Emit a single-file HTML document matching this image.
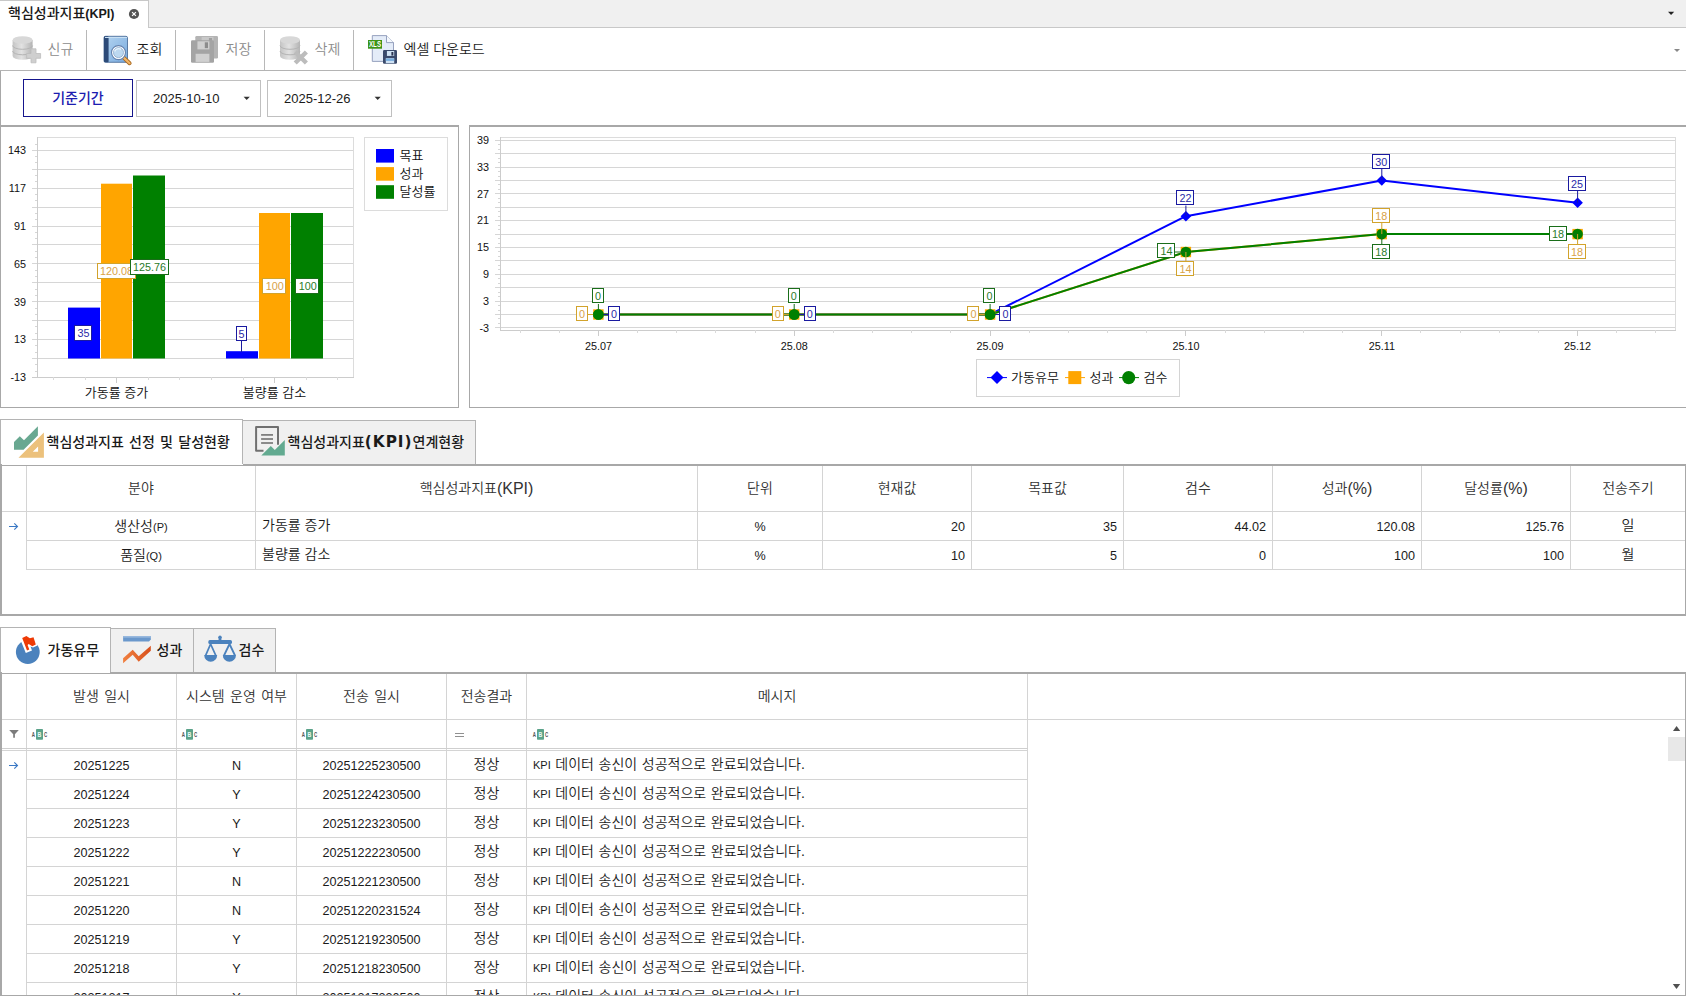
<!DOCTYPE html>
<html lang="ko"><head><meta charset="utf-8"><title>핵심성과지표(KPI)</title>
<style>
html,body{margin:0;padding:0;}
body{width:1686px;height:996px;overflow:hidden;background:#fff;position:relative;
 font-family:"Liberation Sans","Noto Sans CJK KR",sans-serif;font-size:14px;color:#1a1a1a;font-weight:350;}
.a{position:absolute;}
.t{position:absolute;white-space:nowrap;line-height:20px;height:20px;}
.c{text-align:center;}
.r{text-align:right;}
.n{font-size:12.6px;}
.s{font-size:11px;}
.hl{position:absolute;height:1px;background:#d4d4d4;}
.vl{position:absolute;width:1px;background:#d4d4d4;}
.b{font-weight:bold;}
.m{font-weight:500;}
svg{position:absolute;left:0;top:0;}
svg text{font-family:"Liberation Sans","Noto Sans CJK KR",sans-serif;}
</style></head><body>

<div class="a" style="left:0px;top:0px;width:1686px;height:27px;background:#f0f0f0;"></div>
<div class="a" style="left:0px;top:27px;width:1686px;height:1px;background:#c8c8c8;"></div>
<div class="a" style="left:0px;top:0px;width:148px;height:28px;background:#fff;"></div>
<div class="a" style="left:148px;top:0px;width:1px;height:28px;background:#c8c8c8;"></div>
<div class="a" style="left:0px;top:0px;width:149px;height:1px;background:#c8c8c8;"></div>
<div class="t m" style="left:8px;top:3.4000000000000004px;font-size:14px;color:#1a1a1a;">핵심성과지표<span style="font-size:12.5px;font-weight:bold">(KPI)</span></div>
<div class="a" style="left:0px;top:70px;width:1686px;height:1px;background:#b4b4b4;"></div>
<div class="a" style="left:86px;top:30px;width:1px;height:40px;background:#b8b8b8;"></div>
<div class="a" style="left:175px;top:30px;width:1px;height:40px;background:#b8b8b8;"></div>
<div class="a" style="left:264px;top:30px;width:1px;height:40px;background:#b8b8b8;"></div>
<div class="a" style="left:353px;top:30px;width:1px;height:40px;background:#b8b8b8;"></div>
<div class="t " style="left:47.5px;top:38.5px;color:#8c8c8c;">신규</div>
<div class="t " style="left:136.5px;top:38.5px;color:#1a1a1a;">조회</div>
<div class="t " style="left:225.5px;top:38.5px;color:#8c8c8c;">저장</div>
<div class="t " style="left:314.5px;top:38.5px;color:#8c8c8c;">삭제</div>
<div class="t " style="left:403.5px;top:38.5px;color:#1a1a1a;">엑셀 다운로드</div>
<div class="a" style="left:0px;top:71px;width:1px;height:54px;background:#a8a8a8;"></div>
<div class="a" style="left:23px;top:79px;width:108px;height:36px;border:1px solid #15158c;background:#fff;"></div>
<div class="t m c" style="left:23px;top:88.0px;width:110px;color:#1c1cb0;font-size:14px;">기준기간</div>
<div class="a" style="left:136px;top:80px;width:123px;height:35px;border:1px solid #c0c0c0;background:#fff;"></div>
<div class="a" style="left:267px;top:80px;width:123px;height:35px;border:1px solid #c0c0c0;background:#fff;"></div>
<div class="t " style="left:153px;top:88.5px;font-size:13px;">2025-10-10</div>
<div class="t " style="left:284px;top:88.5px;font-size:13px;">2025-12-26</div>
<div class="a" style="left:0px;top:125px;width:459px;height:2px;background:#a8a8a8;"></div>
<div class="a" style="left:0px;top:125px;width:1px;height:283px;background:#a8a8a8;"></div>
<div class="a" style="left:0px;top:407px;width:459px;height:1px;background:#a8a8a8;"></div>
<div class="a" style="left:458px;top:125px;width:1px;height:283px;background:#a8a8a8;"></div>
<div class="a" style="left:469px;top:125px;width:1217px;height:2px;background:#a8a8a8;"></div>
<div class="a" style="left:469px;top:125px;width:1px;height:283px;background:#a8a8a8;"></div>
<div class="a" style="left:469px;top:407px;width:1217px;height:1px;background:#a8a8a8;"></div>
<div class="a" style="left:243px;top:420px;width:232px;height:44px;background:#f0f0f0;border-top:1px solid #b4b4b4;border-right:1px solid #b4b4b4;"></div>
<div class="a" style="left:0px;top:419px;width:243px;height:46px;background:#fff;border-top:1px solid #b4b4b4;border-right:1px solid #b4b4b4;border-left:1px solid #b4b4b4;box-sizing:border-box;"></div>
<div class="t m" style="left:46.5px;top:432.0px;font-size:14px;word-spacing:1.4px;">핵심성과지표 선정 및 달성현황</div>
<div class="t m" style="left:287.5px;top:432.0px;font-size:14px;">핵심성과지표<span style="font-family:'DejaVu Sans',sans-serif;font-size:15.3px;letter-spacing:1px;font-weight:bold;">(KPI)</span>연계현황</div>
<div class="a" style="left:0px;top:464px;width:1686px;height:2px;background:#a8a8a8;"></div>
<div class="a" style="left:1px;top:464px;width:242px;height:1px;background:#fff;"></div>
<div class="a" style="left:0px;top:464px;width:2px;height:152px;background:#a8a8a8;"></div>
<div class="a" style="left:1685px;top:464px;width:1px;height:152px;background:#a8a8a8;"></div>
<div class="a" style="left:0px;top:614px;width:1686px;height:2px;background:#a8a8a8;"></div>
<div class="vl" style="left:26px;top:466px;height:104px;"></div>
<div class="vl" style="left:255px;top:466px;height:104px;"></div>
<div class="vl" style="left:697px;top:466px;height:104px;"></div>
<div class="vl" style="left:822px;top:466px;height:104px;"></div>
<div class="vl" style="left:971px;top:466px;height:104px;"></div>
<div class="vl" style="left:1123px;top:466px;height:104px;"></div>
<div class="vl" style="left:1272px;top:466px;height:104px;"></div>
<div class="vl" style="left:1421px;top:466px;height:104px;"></div>
<div class="vl" style="left:1570px;top:466px;height:104px;"></div>
<div class="hl" style="left:2px;top:511px;width:1683px;"></div>
<div class="hl" style="left:26px;top:540px;width:1659px;"></div>
<div class="hl" style="left:26px;top:569px;width:1659px;"></div>
<div class="t c" style="left:27px;top:478.0px;width:228px;color:#333;">분야</div>
<div class="t c" style="left:256px;top:478.0px;width:441px;color:#333;">핵심성과지표<span style="font-size:16px;position:relative;top:1.3px">(KPI)</span></div>
<div class="t c" style="left:698px;top:478.0px;width:124px;color:#333;">단위</div>
<div class="t c" style="left:823px;top:478.0px;width:148px;color:#333;">현재값</div>
<div class="t c" style="left:972px;top:478.0px;width:151px;color:#333;">목표값</div>
<div class="t c" style="left:1124px;top:478.0px;width:148px;color:#333;">검수</div>
<div class="t c" style="left:1273px;top:478.0px;width:148px;color:#333;">성과<span style="font-size:16px;position:relative;top:1.3px">(%)</span></div>
<div class="t c" style="left:1422px;top:478.0px;width:148px;color:#333;">달성률<span style="font-size:16px;position:relative;top:1.3px">(%)</span></div>
<div class="t c" style="left:1571px;top:478.0px;width:114px;color:#333;">전송주기</div>
<div class="t c" style="left:27px;top:515.5px;width:228px;">생산성<span class="s">(P)</span></div>
<div class="t " style="left:262px;top:514.5px;">가동률 증가</div>
<div class="t c n" style="left:698px;top:516.5px;width:124px;">%</div>
<div class="t r n" style="left:823px;top:516.5px;width:142px;">20</div>
<div class="t r n" style="left:972px;top:516.5px;width:145px;">35</div>
<div class="t r n" style="left:1124px;top:516.5px;width:142px;">44.02</div>
<div class="t r n" style="left:1273px;top:516.5px;width:142px;">120.08</div>
<div class="t r n" style="left:1422px;top:516.5px;width:142px;">125.76</div>
<div class="t c" style="left:1571px;top:514.5px;width:114px;">일</div>
<div class="t c" style="left:27px;top:544.5px;width:228px;">품질<span class="s">(Q)</span></div>
<div class="t " style="left:262px;top:543.5px;">불량률 감소</div>
<div class="t c n" style="left:698px;top:545.5px;width:124px;">%</div>
<div class="t r n" style="left:823px;top:545.5px;width:142px;">10</div>
<div class="t r n" style="left:972px;top:545.5px;width:145px;">5</div>
<div class="t r n" style="left:1124px;top:545.5px;width:142px;">0</div>
<div class="t r n" style="left:1273px;top:545.5px;width:142px;">100</div>
<div class="t r n" style="left:1422px;top:545.5px;width:142px;">100</div>
<div class="t c" style="left:1571px;top:543.5px;width:114px;">월</div>
<div class="a" style="left:110px;top:628px;width:83px;height:44px;background:#f0f0f0;border-top:1px solid #b4b4b4;border-right:1px solid #b4b4b4;"></div>
<div class="a" style="left:194px;top:628px;width:81px;height:44px;background:#f0f0f0;border-top:1px solid #b4b4b4;border-right:1px solid #b4b4b4;"></div>
<div class="a" style="left:0px;top:627px;width:111px;height:46px;background:#fff;border-top:1px solid #b4b4b4;border-right:1px solid #b4b4b4;border-left:1px solid #b4b4b4;box-sizing:border-box;"></div>
<div class="t m" style="left:47.5px;top:640.0px;font-size:14px;">가동유무</div>
<div class="t m" style="left:156.5px;top:640.0px;font-size:14px;">성과</div>
<div class="t m" style="left:238.5px;top:640.0px;font-size:14px;">검수</div>
<div class="a" style="left:0px;top:672px;width:1686px;height:2px;background:#a8a8a8;"></div>
<div class="a" style="left:1px;top:672px;width:109px;height:1px;background:#fff;"></div>
<div class="a" style="left:0px;top:672px;width:2px;height:324px;background:#a8a8a8;"></div>
<div class="a" style="left:1685px;top:672px;width:1px;height:324px;background:#a8a8a8;"></div>
<div class="a" style="left:0px;top:995px;width:1686px;height:1px;background:#a8a8a8;"></div>
<div class="vl" style="left:26px;top:674px;height:321px;"></div>
<div class="vl" style="left:176px;top:674px;height:321px;"></div>
<div class="vl" style="left:296px;top:674px;height:321px;"></div>
<div class="vl" style="left:446px;top:674px;height:321px;"></div>
<div class="vl" style="left:526px;top:674px;height:321px;"></div>
<div class="vl" style="left:1027px;top:674px;height:321px;"></div>
<div class="hl" style="left:2px;top:719px;width:1683px;"></div>
<div class="hl" style="left:2px;top:748px;width:1026px;background:#cfcfcf;"></div>
<div class="hl" style="left:2px;top:750px;width:1026px;"></div>
<div class="hl" style="left:26px;top:779px;width:1002px;"></div>
<div class="hl" style="left:26px;top:808px;width:1002px;"></div>
<div class="hl" style="left:26px;top:837px;width:1002px;"></div>
<div class="hl" style="left:26px;top:866px;width:1002px;"></div>
<div class="hl" style="left:26px;top:895px;width:1002px;"></div>
<div class="hl" style="left:26px;top:924px;width:1002px;"></div>
<div class="hl" style="left:26px;top:953px;width:1002px;"></div>
<div class="hl" style="left:26px;top:982px;width:1002px;"></div>
<div class="t c" style="left:27px;top:686.0px;width:149px;color:#333;word-spacing:1.5px;">발생 일시</div>
<div class="t c" style="left:177px;top:686.0px;width:119px;color:#333;word-spacing:1.5px;">시스템 운영 여부</div>
<div class="t c" style="left:297px;top:686.0px;width:149px;color:#333;word-spacing:1.5px;">전송 일시</div>
<div class="t c" style="left:447px;top:686.0px;width:79px;color:#333;word-spacing:1.5px;">전송결과</div>
<div class="t c" style="left:527px;top:686.0px;width:500px;color:#333;word-spacing:1.5px;">메시지</div>
<div class="a" style="left:0;top:751px;width:1686px;height:244px;overflow:hidden;">
<div class="t c n" style="left:27px;top:5.0px;width:149px;">20251225</div>
<div class="t c n" style="left:177px;top:5.0px;width:119px;">N</div>
<div class="t c n" style="left:297px;top:5.0px;width:149px;">20251225230500</div>
<div class="t c" style="left:447px;top:2.5px;width:79px;">정상</div>
<div class="t " style="left:533px;top:3.0px;word-spacing:0.7px;"><span class="s">KPI</span> 데이터 송신이 성공적으로 완료되었습니다.</div>
<div class="t c n" style="left:27px;top:34.0px;width:149px;">20251224</div>
<div class="t c n" style="left:177px;top:34.0px;width:119px;">Y</div>
<div class="t c n" style="left:297px;top:34.0px;width:149px;">20251224230500</div>
<div class="t c" style="left:447px;top:31.5px;width:79px;">정상</div>
<div class="t " style="left:533px;top:32.0px;word-spacing:0.7px;"><span class="s">KPI</span> 데이터 송신이 성공적으로 완료되었습니다.</div>
<div class="t c n" style="left:27px;top:63.0px;width:149px;">20251223</div>
<div class="t c n" style="left:177px;top:63.0px;width:119px;">Y</div>
<div class="t c n" style="left:297px;top:63.0px;width:149px;">20251223230500</div>
<div class="t c" style="left:447px;top:60.5px;width:79px;">정상</div>
<div class="t " style="left:533px;top:61.0px;word-spacing:0.7px;"><span class="s">KPI</span> 데이터 송신이 성공적으로 완료되었습니다.</div>
<div class="t c n" style="left:27px;top:92.0px;width:149px;">20251222</div>
<div class="t c n" style="left:177px;top:92.0px;width:119px;">Y</div>
<div class="t c n" style="left:297px;top:92.0px;width:149px;">20251222230500</div>
<div class="t c" style="left:447px;top:89.5px;width:79px;">정상</div>
<div class="t " style="left:533px;top:90.0px;word-spacing:0.7px;"><span class="s">KPI</span> 데이터 송신이 성공적으로 완료되었습니다.</div>
<div class="t c n" style="left:27px;top:121.0px;width:149px;">20251221</div>
<div class="t c n" style="left:177px;top:121.0px;width:119px;">N</div>
<div class="t c n" style="left:297px;top:121.0px;width:149px;">20251221230500</div>
<div class="t c" style="left:447px;top:118.5px;width:79px;">정상</div>
<div class="t " style="left:533px;top:119.0px;word-spacing:0.7px;"><span class="s">KPI</span> 데이터 송신이 성공적으로 완료되었습니다.</div>
<div class="t c n" style="left:27px;top:150.0px;width:149px;">20251220</div>
<div class="t c n" style="left:177px;top:150.0px;width:119px;">N</div>
<div class="t c n" style="left:297px;top:150.0px;width:149px;">20251220231524</div>
<div class="t c" style="left:447px;top:147.5px;width:79px;">정상</div>
<div class="t " style="left:533px;top:148.0px;word-spacing:0.7px;"><span class="s">KPI</span> 데이터 송신이 성공적으로 완료되었습니다.</div>
<div class="t c n" style="left:27px;top:179.0px;width:149px;">20251219</div>
<div class="t c n" style="left:177px;top:179.0px;width:119px;">Y</div>
<div class="t c n" style="left:297px;top:179.0px;width:149px;">20251219230500</div>
<div class="t c" style="left:447px;top:176.5px;width:79px;">정상</div>
<div class="t " style="left:533px;top:177.0px;word-spacing:0.7px;"><span class="s">KPI</span> 데이터 송신이 성공적으로 완료되었습니다.</div>
<div class="t c n" style="left:27px;top:208.0px;width:149px;">20251218</div>
<div class="t c n" style="left:177px;top:208.0px;width:119px;">Y</div>
<div class="t c n" style="left:297px;top:208.0px;width:149px;">20251218230500</div>
<div class="t c" style="left:447px;top:205.5px;width:79px;">정상</div>
<div class="t " style="left:533px;top:206.0px;word-spacing:0.7px;"><span class="s">KPI</span> 데이터 송신이 성공적으로 완료되었습니다.</div>
<div class="t c n" style="left:27px;top:237.0px;width:149px;">20251217</div>
<div class="t c n" style="left:177px;top:237.0px;width:119px;">Y</div>
<div class="t c n" style="left:297px;top:237.0px;width:149px;">20251217230500</div>
<div class="t c" style="left:447px;top:234.5px;width:79px;">정상</div>
<div class="t " style="left:533px;top:235.0px;word-spacing:0.7px;"><span class="s">KPI</span> 데이터 송신이 성공적으로 완료되었습니다.</div>
</div>
<svg width="1686" height="996" viewBox="0 0 1686 996" shape-rendering="auto">
<rect x="37" y="137" width="317" height="1" fill="#dcdcdc"/>
<rect x="353" y="137" width="1" height="241" fill="#dcdcdc"/>
<rect x="35" y="371" width="2" height="1" fill="#d6d6d6"/>
<rect x="35" y="364" width="2" height="1" fill="#d6d6d6"/>
<rect x="32" y="358" width="321" height="1" fill="#d6d6d6"/>
<rect x="35" y="352" width="2" height="1" fill="#d6d6d6"/>
<rect x="35" y="345" width="2" height="1" fill="#d6d6d6"/>
<rect x="32" y="339" width="321" height="1" fill="#d6d6d6"/>
<rect x="35" y="333" width="2" height="1" fill="#d6d6d6"/>
<rect x="35" y="326" width="2" height="1" fill="#d6d6d6"/>
<rect x="32" y="320" width="321" height="1" fill="#d6d6d6"/>
<rect x="35" y="314" width="2" height="1" fill="#d6d6d6"/>
<rect x="35" y="308" width="2" height="1" fill="#d6d6d6"/>
<rect x="32" y="301" width="321" height="1" fill="#d6d6d6"/>
<rect x="35" y="295" width="2" height="1" fill="#d6d6d6"/>
<rect x="35" y="289" width="2" height="1" fill="#d6d6d6"/>
<rect x="32" y="282" width="321" height="1" fill="#d6d6d6"/>
<rect x="35" y="276" width="2" height="1" fill="#d6d6d6"/>
<rect x="35" y="270" width="2" height="1" fill="#d6d6d6"/>
<rect x="32" y="263" width="321" height="1" fill="#d6d6d6"/>
<rect x="35" y="257" width="2" height="1" fill="#d6d6d6"/>
<rect x="35" y="251" width="2" height="1" fill="#d6d6d6"/>
<rect x="32" y="244" width="321" height="1" fill="#d6d6d6"/>
<rect x="35" y="238" width="2" height="1" fill="#d6d6d6"/>
<rect x="35" y="232" width="2" height="1" fill="#d6d6d6"/>
<rect x="32" y="226" width="321" height="1" fill="#d6d6d6"/>
<rect x="35" y="219" width="2" height="1" fill="#d6d6d6"/>
<rect x="35" y="213" width="2" height="1" fill="#d6d6d6"/>
<rect x="32" y="207" width="321" height="1" fill="#d6d6d6"/>
<rect x="35" y="200" width="2" height="1" fill="#d6d6d6"/>
<rect x="35" y="194" width="2" height="1" fill="#d6d6d6"/>
<rect x="32" y="188" width="321" height="1" fill="#d6d6d6"/>
<rect x="35" y="181" width="2" height="1" fill="#d6d6d6"/>
<rect x="35" y="175" width="2" height="1" fill="#d6d6d6"/>
<rect x="32" y="169" width="321" height="1" fill="#d6d6d6"/>
<rect x="35" y="162" width="2" height="1" fill="#d6d6d6"/>
<rect x="35" y="156" width="2" height="1" fill="#d6d6d6"/>
<rect x="32" y="150" width="321" height="1" fill="#d6d6d6"/>
<rect x="35" y="144" width="2" height="1" fill="#d6d6d6"/>
<rect x="37" y="137" width="1" height="241" fill="#cccccc"/>
<rect x="32" y="377" width="322" height="1" fill="#cccccc"/>
<rect x="116" y="377" width="1" height="6" fill="#cccccc"/>
<rect x="274" y="377" width="1" height="6" fill="#cccccc"/>
<rect x="53" y="377" width="1" height="3" fill="#dadada"/>
<rect x="85" y="377" width="1" height="3" fill="#dadada"/>
<rect x="148" y="377" width="1" height="3" fill="#dadada"/>
<rect x="179" y="377" width="1" height="3" fill="#dadada"/>
<rect x="211" y="377" width="1" height="3" fill="#dadada"/>
<rect x="243" y="377" width="1" height="3" fill="#dadada"/>
<rect x="306" y="377" width="1" height="3" fill="#dadada"/>
<rect x="337" y="377" width="1" height="3" fill="#dadada"/>
<rect x="68" y="307.6" width="32" height="50.9" fill="#0000ff"/>
<rect x="101" y="183.7" width="31" height="174.8" fill="#ffa500"/>
<rect x="133" y="175.5" width="32" height="183.0" fill="#008000"/>
<rect x="226" y="351.2" width="32" height="7.3" fill="#0000ff"/>
<rect x="259" y="213.0" width="31" height="145.5" fill="#ffa500"/>
<rect x="291" y="213.0" width="32" height="145.5" fill="#008000"/>
<line x1="241.5" y1="341" x2="241.5" y2="352" stroke="#1a1aa0" stroke-width="1"/>
<rect x="74.5" y="325.5" width="17" height="15" fill="#fff" stroke="#1a1aa0" stroke-width="1"/>
<text x="83.5" y="337.3" font-size="10.8" fill="#2a2aa8" text-anchor="middle">35</text>
<rect x="97.5" y="263.5" width="38" height="15" fill="#fff" stroke="#d2a32c" stroke-width="1"/>
<text x="116.5" y="275.1" font-size="10.8" fill="#d8a248" text-anchor="middle">120.08</text>
<rect x="130.5" y="259.5" width="38" height="15" fill="#fff" stroke="#1a6e1a" stroke-width="1"/>
<text x="149.5" y="271.3" font-size="10.8" fill="#2a7a2a" text-anchor="middle">125.76</text>
<rect x="262.5" y="278.5" width="23" height="15" fill="#fff" stroke="#d2a32c" stroke-width="1"/>
<text x="274.8" y="290.3" font-size="10.8" fill="#d8a248" text-anchor="middle">100</text>
<rect x="295.5" y="278.5" width="23" height="15" fill="#fff" stroke="#1a6e1a" stroke-width="1"/>
<text x="307.8" y="290.3" font-size="10.8" fill="#2a7a2a" text-anchor="middle">100</text>
<rect x="236.5" y="326.5" width="10" height="14" fill="#fff" stroke="#1a1aa0" stroke-width="1"/>
<text x="241.5" y="337.8" font-size="10.8" fill="#2a2aa8" text-anchor="middle">5</text>
<text x="26" y="154.2" font-size="10.8" fill="#111" text-anchor="end">143</text>
<text x="26" y="192.0" font-size="10.8" fill="#111" text-anchor="end">117</text>
<text x="26" y="229.9" font-size="10.8" fill="#111" text-anchor="end">91</text>
<text x="26" y="267.7" font-size="10.8" fill="#111" text-anchor="end">65</text>
<text x="26" y="305.5" font-size="10.8" fill="#111" text-anchor="end">39</text>
<text x="26" y="343.4" font-size="10.8" fill="#111" text-anchor="end">13</text>
<text x="26" y="381.2" font-size="10.8" fill="#111" text-anchor="end">-13</text>
<text x="116.5" y="397.3" font-size="13" fill="#111" text-anchor="middle">가동률 증가</text>
<text x="274.5" y="397.3" font-size="13" fill="#111" text-anchor="middle">불량률 감소</text>
<rect x="364.5" y="137.5" width="83" height="73" fill="#fff" stroke="#dcdcdc"/>
<rect x="376" y="149.0" width="18" height="13.6" fill="#0000ff"/>
<text x="399.5" y="160.0" font-size="13" fill="#111">목표</text>
<rect x="376" y="167.1" width="18" height="13.6" fill="#ffa500"/>
<text x="399.5" y="178.1" font-size="13" fill="#111">성과</text>
<rect x="376" y="185.2" width="18" height="13.6" fill="#008000"/>
<text x="399.5" y="196.2" font-size="13" fill="#111">달성률</text>
<rect x="500" y="137" width="1176" height="1" fill="#dcdcdc"/>
<rect x="1675" y="137" width="1" height="194" fill="#dcdcdc"/>
<rect x="495" y="327" width="1180" height="1" fill="#d6d6d6"/>
<rect x="498" y="323" width="2" height="1" fill="#d6d6d6"/>
<rect x="498" y="318" width="2" height="1" fill="#d6d6d6"/>
<rect x="495" y="314" width="1180" height="1" fill="#d6d6d6"/>
<rect x="498" y="310" width="2" height="1" fill="#d6d6d6"/>
<rect x="498" y="305" width="2" height="1" fill="#d6d6d6"/>
<rect x="495" y="301" width="1180" height="1" fill="#d6d6d6"/>
<rect x="498" y="296" width="2" height="1" fill="#d6d6d6"/>
<rect x="498" y="292" width="2" height="1" fill="#d6d6d6"/>
<rect x="495" y="287" width="1180" height="1" fill="#d6d6d6"/>
<rect x="498" y="283" width="2" height="1" fill="#d6d6d6"/>
<rect x="498" y="278" width="2" height="1" fill="#d6d6d6"/>
<rect x="495" y="274" width="1180" height="1" fill="#d6d6d6"/>
<rect x="498" y="269" width="2" height="1" fill="#d6d6d6"/>
<rect x="498" y="265" width="2" height="1" fill="#d6d6d6"/>
<rect x="495" y="260" width="1180" height="1" fill="#d6d6d6"/>
<rect x="498" y="256" width="2" height="1" fill="#d6d6d6"/>
<rect x="498" y="251" width="2" height="1" fill="#d6d6d6"/>
<rect x="495" y="247" width="1180" height="1" fill="#d6d6d6"/>
<rect x="498" y="243" width="2" height="1" fill="#d6d6d6"/>
<rect x="498" y="238" width="2" height="1" fill="#d6d6d6"/>
<rect x="495" y="234" width="1180" height="1" fill="#d6d6d6"/>
<rect x="498" y="229" width="2" height="1" fill="#d6d6d6"/>
<rect x="498" y="225" width="2" height="1" fill="#d6d6d6"/>
<rect x="495" y="220" width="1180" height="1" fill="#d6d6d6"/>
<rect x="498" y="216" width="2" height="1" fill="#d6d6d6"/>
<rect x="498" y="211" width="2" height="1" fill="#d6d6d6"/>
<rect x="495" y="207" width="1180" height="1" fill="#d6d6d6"/>
<rect x="498" y="202" width="2" height="1" fill="#d6d6d6"/>
<rect x="498" y="198" width="2" height="1" fill="#d6d6d6"/>
<rect x="495" y="193" width="1180" height="1" fill="#d6d6d6"/>
<rect x="498" y="189" width="2" height="1" fill="#d6d6d6"/>
<rect x="498" y="184" width="2" height="1" fill="#d6d6d6"/>
<rect x="495" y="180" width="1180" height="1" fill="#d6d6d6"/>
<rect x="498" y="176" width="2" height="1" fill="#d6d6d6"/>
<rect x="498" y="171" width="2" height="1" fill="#d6d6d6"/>
<rect x="495" y="167" width="1180" height="1" fill="#d6d6d6"/>
<rect x="498" y="162" width="2" height="1" fill="#d6d6d6"/>
<rect x="498" y="158" width="2" height="1" fill="#d6d6d6"/>
<rect x="495" y="153" width="1180" height="1" fill="#d6d6d6"/>
<rect x="498" y="149" width="2" height="1" fill="#d6d6d6"/>
<rect x="498" y="144" width="2" height="1" fill="#d6d6d6"/>
<rect x="495" y="140" width="1180" height="1" fill="#d6d6d6"/>
<rect x="500" y="137" width="1" height="194" fill="#cccccc"/>
<rect x="500" y="330" width="1176" height="1" fill="#cccccc"/>
<rect x="520" y="330" width="1" height="3" fill="#dadada"/>
<rect x="559" y="330" width="1" height="3" fill="#dadada"/>
<rect x="598" y="330" width="1" height="6" fill="#cccccc"/>
<rect x="637" y="330" width="1" height="3" fill="#dadada"/>
<rect x="676" y="330" width="1" height="3" fill="#dadada"/>
<rect x="715" y="330" width="1" height="3" fill="#dadada"/>
<rect x="755" y="330" width="1" height="3" fill="#dadada"/>
<rect x="794" y="330" width="1" height="6" fill="#cccccc"/>
<rect x="833" y="330" width="1" height="3" fill="#dadada"/>
<rect x="872" y="330" width="1" height="3" fill="#dadada"/>
<rect x="911" y="330" width="1" height="3" fill="#dadada"/>
<rect x="950" y="330" width="1" height="3" fill="#dadada"/>
<rect x="990" y="330" width="1" height="6" fill="#cccccc"/>
<rect x="1029" y="330" width="1" height="3" fill="#dadada"/>
<rect x="1068" y="330" width="1" height="3" fill="#dadada"/>
<rect x="1107" y="330" width="1" height="3" fill="#dadada"/>
<rect x="1146" y="330" width="1" height="3" fill="#dadada"/>
<rect x="1185" y="330" width="1" height="6" fill="#cccccc"/>
<rect x="1225" y="330" width="1" height="3" fill="#dadada"/>
<rect x="1264" y="330" width="1" height="3" fill="#dadada"/>
<rect x="1303" y="330" width="1" height="3" fill="#dadada"/>
<rect x="1342" y="330" width="1" height="3" fill="#dadada"/>
<rect x="1381" y="330" width="1" height="6" fill="#cccccc"/>
<rect x="1420" y="330" width="1" height="3" fill="#dadada"/>
<rect x="1460" y="330" width="1" height="3" fill="#dadada"/>
<rect x="1499" y="330" width="1" height="3" fill="#dadada"/>
<rect x="1538" y="330" width="1" height="3" fill="#dadada"/>
<rect x="1577" y="330" width="1" height="6" fill="#cccccc"/>
<rect x="1616" y="330" width="1" height="3" fill="#dadada"/>
<rect x="1655" y="330" width="1" height="3" fill="#dadada"/>
<text x="489" y="143.9" font-size="10.8" fill="#111" text-anchor="end">39</text>
<text x="489" y="170.7" font-size="10.8" fill="#111" text-anchor="end">33</text>
<text x="489" y="197.5" font-size="10.8" fill="#111" text-anchor="end">27</text>
<text x="489" y="224.3" font-size="10.8" fill="#111" text-anchor="end">21</text>
<text x="489" y="251.1" font-size="10.8" fill="#111" text-anchor="end">15</text>
<text x="489" y="277.9" font-size="10.8" fill="#111" text-anchor="end">9</text>
<text x="489" y="304.7" font-size="10.8" fill="#111" text-anchor="end">3</text>
<text x="489" y="331.5" font-size="10.8" fill="#111" text-anchor="end">-3</text>
<text x="598.4" y="349.6" font-size="10.8" fill="#111" text-anchor="middle">25.07</text>
<text x="794.2" y="349.6" font-size="10.8" fill="#111" text-anchor="middle">25.08</text>
<text x="990.1" y="349.6" font-size="10.8" fill="#111" text-anchor="middle">25.09</text>
<text x="1185.9" y="349.6" font-size="10.8" fill="#111" text-anchor="middle">25.10</text>
<text x="1381.8" y="349.6" font-size="10.8" fill="#111" text-anchor="middle">25.11</text>
<text x="1577.6" y="349.6" font-size="10.8" fill="#111" text-anchor="middle">25.12</text>
<polyline points="598.4,314.5 794.2,314.5 990.1,314.5 1185.9,216.2 1381.8,180.5 1577.6,202.8" fill="none" stroke="#0000ff" stroke-width="2" stroke-linejoin="round"/>
<polyline points="598.4,314.5 794.2,314.5 990.1,314.5 1185.9,252.0 1381.8,234.1 1577.6,234.1" fill="none" stroke="#ffa500" stroke-width="2" stroke-linejoin="round"/>
<polyline points="598.4,314.5 794.2,314.5 990.1,314.5 1185.9,252.0 1381.8,234.1 1577.6,234.1" fill="none" stroke="#008000" stroke-width="2" stroke-linejoin="round"/>
<polygon points="593.1,314.5 598.4,309.2 603.7,314.5 598.4,319.8" fill="#0000ff"/>
<polygon points="789.0,314.5 794.2,309.2 799.5,314.5 794.2,319.8" fill="#0000ff"/>
<polygon points="984.8,314.5 990.1,309.2 995.4,314.5 990.1,319.8" fill="#0000ff"/>
<polygon points="1180.6,216.2 1185.9,210.9 1191.2,216.2 1185.9,221.5" fill="#0000ff"/>
<polygon points="1376.5,180.5 1381.8,175.2 1387.0,180.5 1381.8,185.8" fill="#0000ff"/>
<polygon points="1572.3,202.8 1577.6,197.5 1582.9,202.8 1577.6,208.1" fill="#0000ff"/>
<rect x="593.2" y="309.3" width="10.4" height="10.4" fill="#ffa500"/>
<rect x="789.0" y="309.3" width="10.4" height="10.4" fill="#ffa500"/>
<rect x="984.9" y="309.3" width="10.4" height="10.4" fill="#ffa500"/>
<rect x="1180.7" y="246.8" width="10.4" height="10.4" fill="#ffa500"/>
<rect x="1376.5" y="228.9" width="10.4" height="10.4" fill="#ffa500"/>
<rect x="1572.4" y="228.9" width="10.4" height="10.4" fill="#ffa500"/>
<circle cx="598.4" cy="314.5" r="5.3" fill="#008000"/>
<circle cx="794.2" cy="314.5" r="5.3" fill="#008000"/>
<circle cx="990.1" cy="314.5" r="5.3" fill="#008000"/>
<circle cx="1185.9" cy="252.0" r="5.3" fill="#008000"/>
<circle cx="1381.8" cy="234.1" r="5.3" fill="#008000"/>
<circle cx="1577.6" cy="234.1" r="5.3" fill="#008000"/>
<line x1="587.4" y1="314.5" x2="598.4" y2="314.5" stroke="#d2a32c" stroke-width="1"/>
<line x1="598.4" y1="314.5" x2="608.4" y2="314.5" stroke="#1a1aa0" stroke-width="1"/>
<line x1="598.4" y1="304.0" x2="598.4" y2="314.5" stroke="#1a6e1a" stroke-width="1"/>
<circle cx="598.4" cy="314.5" r="5.3" fill="#008000"/>
<rect x="576.5" y="306.5" width="11" height="14" fill="#fff" stroke="#d2a32c" stroke-width="1"/>
<text x="581.9" y="317.8" font-size="10.8" fill="#d8a248" text-anchor="middle">0</text>
<rect x="608.5" y="306.5" width="11" height="14" fill="#fff" stroke="#1a1aa0" stroke-width="1"/>
<text x="613.9" y="317.8" font-size="10.8" fill="#2a2aa8" text-anchor="middle">0</text>
<rect x="592.5" y="288.5" width="11" height="14" fill="#fff" stroke="#1a6e1a" stroke-width="1"/>
<text x="597.9" y="299.6" font-size="10.8" fill="#2a7a2a" text-anchor="middle">0</text>
<line x1="783.2" y1="314.5" x2="794.2" y2="314.5" stroke="#d2a32c" stroke-width="1"/>
<line x1="794.2" y1="314.5" x2="804.2" y2="314.5" stroke="#1a1aa0" stroke-width="1"/>
<line x1="794.2" y1="304.0" x2="794.2" y2="314.5" stroke="#1a6e1a" stroke-width="1"/>
<circle cx="794.2" cy="314.5" r="5.3" fill="#008000"/>
<rect x="772.5" y="306.5" width="11" height="14" fill="#fff" stroke="#d2a32c" stroke-width="1"/>
<text x="777.8" y="317.8" font-size="10.8" fill="#d8a248" text-anchor="middle">0</text>
<rect x="804.5" y="306.5" width="11" height="14" fill="#fff" stroke="#1a1aa0" stroke-width="1"/>
<text x="809.8" y="317.8" font-size="10.8" fill="#2a2aa8" text-anchor="middle">0</text>
<rect x="788.5" y="288.5" width="11" height="14" fill="#fff" stroke="#1a6e1a" stroke-width="1"/>
<text x="793.8" y="299.6" font-size="10.8" fill="#2a7a2a" text-anchor="middle">0</text>
<line x1="979.1" y1="314.5" x2="990.1" y2="314.5" stroke="#d2a32c" stroke-width="1"/>
<line x1="990.1" y1="314.5" x2="1000.1" y2="314.5" stroke="#1a1aa0" stroke-width="1"/>
<line x1="990.1" y1="304.0" x2="990.1" y2="314.5" stroke="#1a6e1a" stroke-width="1"/>
<circle cx="990.1" cy="314.5" r="5.3" fill="#008000"/>
<rect x="967.5" y="306.5" width="11" height="14" fill="#fff" stroke="#d2a32c" stroke-width="1"/>
<text x="973.6" y="317.8" font-size="10.8" fill="#d8a248" text-anchor="middle">0</text>
<rect x="999.5" y="306.5" width="11" height="14" fill="#fff" stroke="#1a1aa0" stroke-width="1"/>
<text x="1005.6" y="317.8" font-size="10.8" fill="#2a2aa8" text-anchor="middle">0</text>
<rect x="983.5" y="288.5" width="11" height="14" fill="#fff" stroke="#1a6e1a" stroke-width="1"/>
<text x="989.6" y="299.6" font-size="10.8" fill="#2a7a2a" text-anchor="middle">0</text>
<line x1="1185.9" y1="205.5" x2="1185.9" y2="216.2" stroke="#1a1aa0" stroke-width="1"/>
<rect x="1176.5" y="190.5" width="17" height="14" fill="#fff" stroke="#1a1aa0" stroke-width="1"/>
<text x="1185.4" y="201.8" font-size="10.8" fill="#2a2aa8" text-anchor="middle">22</text>
<line x1="1174.9" y1="252.0" x2="1185.9" y2="252.0" stroke="#1a6e1a" stroke-width="1"/>
<rect x="1157.5" y="243.5" width="17" height="14" fill="#fff" stroke="#1a6e1a" stroke-width="1"/>
<text x="1166.4" y="254.8" font-size="10.8" fill="#2a7a2a" text-anchor="middle">14</text>
<line x1="1185.9" y1="252.0" x2="1185.9" y2="262.0" stroke="#d2a32c" stroke-width="1"/>
<rect x="1176.5" y="261.5" width="17" height="14" fill="#fff" stroke="#d2a32c" stroke-width="1"/>
<text x="1185.4" y="272.8" font-size="10.8" fill="#d8a248" text-anchor="middle">14</text>
<line x1="1381.8" y1="169.0" x2="1381.8" y2="180.5" stroke="#1a1aa0" stroke-width="1"/>
<rect x="1372.5" y="154.5" width="17" height="14" fill="#fff" stroke="#1a1aa0" stroke-width="1"/>
<text x="1381.2" y="165.5" font-size="10.8" fill="#2a2aa8" text-anchor="middle">30</text>
<line x1="1381.8" y1="223.0" x2="1381.8" y2="234.1" stroke="#d2a32c" stroke-width="1"/>
<rect x="1372.5" y="208.5" width="17" height="14" fill="#fff" stroke="#d2a32c" stroke-width="1"/>
<text x="1381.2" y="219.6" font-size="10.8" fill="#d8a248" text-anchor="middle">18</text>
<line x1="1381.8" y1="234.1" x2="1381.8" y2="245.0" stroke="#1a6e1a" stroke-width="1"/>
<rect x="1372.5" y="244.5" width="17" height="14" fill="#fff" stroke="#1a6e1a" stroke-width="1"/>
<text x="1381.2" y="256.1" font-size="10.8" fill="#2a7a2a" text-anchor="middle">18</text>
<line x1="1577.6" y1="191.0" x2="1577.6" y2="202.8" stroke="#1a1aa0" stroke-width="1"/>
<rect x="1568.5" y="176.5" width="17" height="14" fill="#fff" stroke="#1a1aa0" stroke-width="1"/>
<text x="1577.1" y="187.8" font-size="10.8" fill="#2a2aa8" text-anchor="middle">25</text>
<line x1="1566.6" y1="234.1" x2="1577.6" y2="234.1" stroke="#1a6e1a" stroke-width="1"/>
<rect x="1549.5" y="226.5" width="17" height="14" fill="#fff" stroke="#1a6e1a" stroke-width="1"/>
<text x="1558.1" y="238.0" font-size="10.8" fill="#2a7a2a" text-anchor="middle">18</text>
<line x1="1577.6" y1="234.1" x2="1577.6" y2="245.0" stroke="#d2a32c" stroke-width="1"/>
<rect x="1568.5" y="244.5" width="17" height="14" fill="#fff" stroke="#d2a32c" stroke-width="1"/>
<text x="1577.1" y="256.1" font-size="10.8" fill="#d8a248" text-anchor="middle">18</text>
<rect x="976.5" y="359.5" width="203" height="37" fill="#fff" stroke="#d4d4d4"/>
<line x1="987" y1="377.6" x2="1007" y2="377.6" stroke="#0000ff" stroke-width="1"/>
<polygon points="990.5,377.6 997,371.1 1003.5,377.6 997,384.1" fill="#0000ff"/>
<text x="1011" y="382.20000000000005" font-size="13" fill="#111">가동유무</text>
<line x1="1065" y1="377.6" x2="1085" y2="377.6" stroke="#ffa500" stroke-width="1"/>
<rect x="1068.3" y="371.1" width="13" height="13" fill="#ffa500"/>
<text x="1089.5" y="382.20000000000005" font-size="13" fill="#111">성과</text>
<line x1="1119" y1="377.6" x2="1139" y2="377.6" stroke="#008000" stroke-width="1"/>
<circle cx="1128.7" cy="377.6" r="6.6" fill="#008000"/>
<text x="1143.5" y="382.20000000000005" font-size="13" fill="#111">검수</text>
<path d="M9.0,526.5 H17.5 M14.3,523.3 L17.5,526.5 L14.3,529.7" fill="none" stroke="#3a78c4" stroke-width="1.1"/>
<path d="M9.0,765.5 H17.5 M14.3,762.3 L17.5,765.5 L14.3,768.7" fill="none" stroke="#3a78c4" stroke-width="1.1"/>
<path d="M9.2,730 H18.8 L14.9,734.2 V737.8 H13.2 V734.2 Z" fill="#7c7c7c"/>
<rect x="36.0" y="729" width="7" height="10.8" rx="0.8" fill="#5ba38a"/>
<text x="31.7" y="737" font-size="6.6" font-weight="bold" fill="#555" textLength="3.2" lengthAdjust="spacingAndGlyphs">A</text>
<text x="37.6" y="737" font-size="6.6" font-weight="bold" fill="#eefaf5" textLength="3.8" lengthAdjust="spacingAndGlyphs">B</text>
<text x="43.9" y="737" font-size="6.6" font-weight="bold" fill="#555" textLength="3.2" lengthAdjust="spacingAndGlyphs">C</text>
<rect x="186.0" y="729" width="7" height="10.8" rx="0.8" fill="#5ba38a"/>
<text x="181.7" y="737" font-size="6.6" font-weight="bold" fill="#555" textLength="3.2" lengthAdjust="spacingAndGlyphs">A</text>
<text x="187.6" y="737" font-size="6.6" font-weight="bold" fill="#eefaf5" textLength="3.8" lengthAdjust="spacingAndGlyphs">B</text>
<text x="193.89999999999998" y="737" font-size="6.6" font-weight="bold" fill="#555" textLength="3.2" lengthAdjust="spacingAndGlyphs">C</text>
<rect x="306.0" y="729" width="7" height="10.8" rx="0.8" fill="#5ba38a"/>
<text x="301.7" y="737" font-size="6.6" font-weight="bold" fill="#555" textLength="3.2" lengthAdjust="spacingAndGlyphs">A</text>
<text x="307.59999999999997" y="737" font-size="6.6" font-weight="bold" fill="#eefaf5" textLength="3.8" lengthAdjust="spacingAndGlyphs">B</text>
<text x="313.9" y="737" font-size="6.6" font-weight="bold" fill="#555" textLength="3.2" lengthAdjust="spacingAndGlyphs">C</text>
<rect x="537.0" y="729" width="7" height="10.8" rx="0.8" fill="#5ba38a"/>
<text x="532.7" y="737" font-size="6.6" font-weight="bold" fill="#555" textLength="3.2" lengthAdjust="spacingAndGlyphs">A</text>
<text x="538.6" y="737" font-size="6.6" font-weight="bold" fill="#eefaf5" textLength="3.8" lengthAdjust="spacingAndGlyphs">B</text>
<text x="544.9000000000001" y="737" font-size="6.6" font-weight="bold" fill="#555" textLength="3.2" lengthAdjust="spacingAndGlyphs">C</text>
<rect x="455" y="733" width="9" height="1" fill="#909090"/><rect x="455" y="736" width="9" height="1" fill="#909090"/>
<rect x="1668" y="737" width="17" height="24" fill="#e8e8e8"/>
<path d="M1673,731 L1676.6,726 L1680.2,731 Z" fill="#505050"/>
<path d="M1672.8,984 L1680.2,984 L1676.5,989 Z" fill="#505050"/>
<defs>
<linearGradient id="gg" x1="0" y1="0" x2="1" y2="0"><stop offset="0" stop-color="#c4c4c4"/><stop offset="0.45" stop-color="#e2e2e2"/><stop offset="1" stop-color="#b4b4b4"/></linearGradient>
<linearGradient id="bk" x1="0" y1="0" x2="1" y2="1"><stop offset="0" stop-color="#b4d4f0"/><stop offset="1" stop-color="#78aade"/></linearGradient>
<linearGradient id="or" x1="0" y1="0" x2="1" y2="0"><stop offset="0" stop-color="#f08040"/><stop offset="1" stop-color="#d8501c"/></linearGradient>
</defs>
<circle cx="134" cy="14" r="5.1" fill="#555"/><path d="M132.1,12.1 L135.9,15.9 M135.9,12.1 L132.1,15.9" stroke="#fff" stroke-width="1.25"/>
<path d="M1668,11.8 H1674.2 L1671.1,15 Z" fill="#222"/>
<path d="M1674,49 H1680 L1677,52 Z" fill="#888"/>
<path d="M243.6,96.8 H249.8 L246.7,100 Z" fill="#333"/>
<path d="M374.6,96.8 H380.8 L377.7,100 Z" fill="#333"/>
<path d="M12.6,40 V56 A10,3.8 0 0 0 32.6,56 V40 Z" fill="url(#gg)"/>
<ellipse cx="22.6" cy="40" rx="10" ry="3.8" fill="#d8d8d8"/>
<path d="M12.6,45.5 A10,3.8 0 0 0 32.6,45.5 M12.6,51 A10,3.8 0 0 0 32.6,51" fill="none" stroke="#b4b4b4" stroke-width="1"/>
<path d="M31,48.8 H36 V53.5 H40.6 V58.3 H36 V62.8 H31 V58.3 H26.6 V53.5 H31 Z" fill="#cfcfcf" stroke="#bdbdbd" stroke-width="0.8"/>
<rect x="104" y="36.3" width="23.5" height="26" rx="1.5" fill="url(#bk)" stroke="#3f628f" stroke-width="0.8"/>
<rect x="104" y="36.3" width="4.6" height="26" rx="1" fill="#2c4a78"/>
<path d="M105,37.5 L127,37.5" stroke="#c8e0f4" stroke-width="1"/>
<line x1="123.4" y1="57.4" x2="129.6" y2="63.2" stroke="#a86820" stroke-width="4" stroke-linecap="round"/>
<line x1="123.4" y1="57.4" x2="129.6" y2="63.2" stroke="#f2b466" stroke-width="2.2" stroke-linecap="round"/>
<circle cx="118.5" cy="52.6" r="7" fill="#ffffff" stroke="#6482ae" stroke-width="1.1"/>
<circle cx="118.5" cy="52.6" r="5" fill="#bcd8f0" stroke="#8aa8cc" stroke-width="0.8"/>
<path d="M114.6,51.5 A4.2,4.2 0 0 1 121,49.4" fill="none" stroke="#e8f3fb" stroke-width="1.4"/>
<rect x="195.3" y="36" width="22.7" height="22.5" rx="1.2" fill="#b4b4b4"/>
<rect x="201.656" y="37" width="11.804" height="8.1" fill="#c8c8c8"/>
<rect x="208.92000000000002" y="38" width="3.1780000000000004" height="5.8500000000000005" fill="#a0a0a0"/>
<rect x="199.84" y="49.5" width="13.62" height="8.1" fill="#c8c8c8"/>
<rect x="191" y="40.3" width="23" height="22.5" rx="1.2" fill="#a4a4a4"/>
<rect x="197.44" y="41.3" width="11.96" height="8.1" fill="#d0d0d0"/>
<rect x="204.8" y="42.3" width="3.22" height="5.8500000000000005" fill="#8c8c8c"/>
<rect x="195.6" y="53.8" width="13.799999999999999" height="8.1" fill="#d0d0d0"/>
<path d="M280,40 V56 A10,3.8 0 0 0 300,56 V40 Z" fill="url(#gg)"/>
<ellipse cx="290" cy="40" rx="10" ry="3.8" fill="#d8d8d8"/>
<path d="M280,45.5 A10,3.8 0 0 0 300,45.5 M280,51 A10,3.8 0 0 0 300,51" fill="none" stroke="#b4b4b4" stroke-width="1"/>
<path d="M295.2,52 L306.4,63 M306.4,52 L295.2,63" stroke="#bcbcbc" stroke-width="4.4" fill="none"/>
<path d="M372.3,35.6 H386.5 L393.5,42.6 V61.4 H372.3 Z" fill="#e4ecf8" stroke="#8c98b8" stroke-width="0.9"/>
<path d="M386.5,35.6 V42.6 H393.5" fill="#f4f8fc" stroke="#8c98b8" stroke-width="0.9"/>
<rect x="368" y="40" width="14" height="8.7" fill="#3c9414"/>
<text x="369" y="47.3" font-size="8.2" font-weight="bold" fill="#fff" textLength="12" lengthAdjust="spacingAndGlyphs">XLS</text>
<rect x="383" y="50" width="14" height="13.7" rx="1.2" fill="#3a4a6c"/>
<rect x="386.92" y="51" width="7.28" height="4.9319999999999995" fill="#cfe2f4"/>
<rect x="391.4" y="52" width="1.9600000000000002" height="3.562" fill="#2a3450"/>
<rect x="385.8" y="58.22" width="8.4" height="4.9319999999999995" fill="#cfe2f4"/>
<rect x="385.8" y="58.5" width="8.4" height="2.4" fill="#7ab0e0"/>
<polygon points="14,442.1 19.8,436.3 24,440.3 37.9,426.2 37.9,435.5 23.6,449.8 14,449.8" fill="#69a891"/>
<path d="M18.5,457.8 L43.9,432.4 V457.8 Z M32.8,451.8 H38.1 V446.5 Z" fill="#ecc17c" fill-rule="evenodd"/>
<path d="M278,444.7 V427 H256.1 V450.8 H263.5" fill="none" stroke="#707070" stroke-width="2" stroke-linejoin="round"/>
<rect x="261.1" y="434.0" width="11.9" height="1.8" fill="#808080"/>
<rect x="261.1" y="438.1" width="11.9" height="1.8" fill="#808080"/>
<rect x="261.1" y="442.1" width="11.9" height="1.8" fill="#808080"/>
<polygon points="261.3,455.6 270.8,446.1 274.8,450 284.8,440.1 284.8,455.6" fill="#62aa90"/>
<circle cx="27.8" cy="652.1" r="11.9" fill="#4b82bd"/>
<path d="M20.5,640 L27,636.5 L30.5,638.8 L34,637.5 L37.5,645.5 L33,647.5 L30.5,646.5 L32,650.5 L25.8,653 Z" fill="#fff"/>
<path d="M22.2,638 L26.4,636.1 L29.9,638.2 L33.5,637.3 L35.8,644.4 L32.3,646.2 L28.7,644.1 L27.6,645 L29.3,649.4 L27,650.4 Z" fill="#ee3a05"/>
<path d="M123.1,636.1 H150.8 V639.6 L149,641.6 H123.1 Z" fill="#6a98cc"/><path d="M123.1,636.1 H150.8 V637.6 H123.1 Z" fill="#9cbce0"/>
<polygon points="123.1,658.3 132.7,649.7 138.7,656.2 150.8,645.7 150.8,650.7 138.7,661.8 132.7,654.7 123.1,663.3" fill="url(#or)"/>
<rect x="208.3" y="640.1" width="23.7" height="3.9" rx="1.6" fill="#4b82bd"/><rect x="218.6" y="636.5" width="2.8" height="5" rx="1.2" fill="#4b82bd"/><circle cx="220" cy="637.3" r="1.7" fill="#4b82bd"/>
<path d="M210.6,644 L205.6,655.5 M210.6,644 L215.8,655.5 M229.5,644 L224,655.5 M229.5,644 L235,655.5" stroke="#4b82bd" stroke-width="1.8" fill="none"/>
<path d="M204.2,655 H217.2 A6.5,6.8 0 0 1 204.2,655 Z" fill="#4b82bd"/><path d="M222.8,655 H236 A6.6,6.8 0 0 1 222.8,655 Z" fill="#4b82bd"/>
</svg>
</body></html>
